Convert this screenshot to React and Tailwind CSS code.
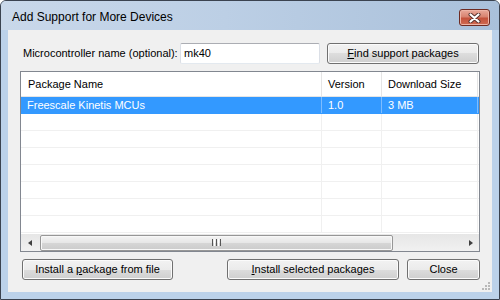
import React from "react";

const btn =
  "h-[21px] rounded-[3px] border border-[#707070] bg-[linear-gradient(#f2f2f2_0%,#ebebeb_50%,#dddddd_50%,#cfcfcf_100%)] shadow-[inset_0_0_0_1px_#fbfbfb] text-[11px] text-black flex items-center justify-center leading-none";

function CloseButton() {
  return (
    <div className="w-[31px] h-[17px] mt-[8px] rounded-[3px] border border-[#6e2b22] bg-[linear-gradient(#e9a99a_0%,#d88370_45%,#c4523c_55%,#cf6b52_100%)] shadow-[inset_0_0_0_1px_#eeb4a6] flex items-center justify-center">
      <svg width="13" height="10" viewBox="0 0 13 10">
        <path d="M2.5 1.5 L10.5 8.5 M10.5 1.5 L2.5 8.5" stroke="#55302c" strokeWidth="4" strokeLinecap="round" />
        <path d="M2.5 1.5 L10.5 8.5 M10.5 1.5 L2.5 8.5" stroke="#ffffff" strokeWidth="2.2" strokeLinecap="round" />
      </svg>
    </div>
  );
}

function Row({ selected, cells }) {
  const line = selected ? "border-[#7dbcff]" : "border-[#f0f0f0]";
  return (
    <div
      className={`flex h-[17px] shrink-0 border-b ${selected ? "bg-[#3399ff] text-white border-[#3399ff]" : "border-[#f0f0f0]"}`}
    >
      <div className={`w-[301px] border-r ${line} pl-[6px] flex items-center`}>{cells[0]}</div>
      <div className={`w-[60px] border-r ${line} pl-[6px] flex items-center`}>{cells[1]}</div>
      <div className={`w-[96px] border-r ${line} pl-[6px] flex items-center`}>{cells[2]}</div>
      <div className="flex-1" />
    </div>
  );
}

function Scrollbar() {
  return (
    <div className="h-[17px] shrink-0 flex items-center bg-[linear-gradient(#e6e6e6,#f1f1f1)]">
      <div className="w-[17px] h-full flex items-center justify-center">
        <div className="w-0 h-0 border-y-[3.5px] border-y-transparent border-r-[4px] border-r-[#404040]" />
      </div>
      <div className="ml-[2px] w-[353px] h-[16px] rounded-[2px] border border-[#979797] bg-[linear-gradient(#f4f4f4_0%,#e6e6e6_50%,#d6d6d6_51%,#cbcbcb_100%)] shadow-[inset_0_0_0_1px_#f8f8f8] flex items-center justify-center gap-[1px]">
        <div className="w-[1px] h-[7px] bg-[#555]" />
        <div className="w-[1px] h-[7px] bg-[#fff]" />
        <div className="w-[1px] h-[7px] bg-[#555]" />
        <div className="w-[1px] h-[7px] bg-[#fff]" />
        <div className="w-[1px] h-[7px] bg-[#555]" />
      </div>
      <div className="flex-1" />
      <div className="w-[17px] h-full flex items-center justify-center">
        <div className="w-0 h-0 border-y-[3.5px] border-y-transparent border-l-[4px] border-l-[#404040]" />
      </div>
    </div>
  );
}

export default function App() {
  const empty = ["", "", ""];
  return (
    <div className="w-[500px] h-[300px] bg-white font-['Liberation_Sans',Arial,sans-serif]">
      <div className="w-[500px] h-[300px] flex flex-col border border-[#3b4350] rounded-t-[6px] overflow-hidden bg-[#bcd2ea]">
        {/* Title bar */}
        <div className="h-[29px] shrink-0 flex justify-between pl-[11px] pr-[9px] bg-[linear-gradient(90deg,#c9d8ea_0%,#bccfe5_45%,#a9c0da_100%)]">
          <span className="text-[12px] text-black pt-[10px] leading-none">Add Support for More Devices</span>
          <CloseButton />
        </div>

        {/* Client area */}
        <div className="relative flex-1 mx-[7px] mb-[7px] bg-[#f0f0f0] flex flex-col px-[12px] pt-[13px] text-[11px] text-black">
          <div className="flex items-center h-[21px]">
            <span className="pl-[3px] w-[160px]">Microcontroller name (optional):</span>
            <div className="w-[140px] h-[21px] rounded-[2px] border border-[#abadb3] border-b-[#e3e9ef] border-x-[#dbdfe6] bg-white flex items-center pl-[3px]">
              mk40
            </div>
            <button className={`${btn} ml-[7px] w-[152px]`}>
              <span>
                <u>F</u>ind support packages
              </span>
            </button>
          </div>

          {/* List view */}
          <div className="mt-[7px] h-[181px] border border-[#828790] bg-white flex flex-col">
            <div className="h-[25px] shrink-0 flex border-b border-[#e5e5e5]">
              <div className="w-[301px] border-r border-[#e5e5e5] pl-[7px] flex items-center">Package Name</div>
              <div className="w-[60px] border-r border-[#e5e5e5] pl-[6px] flex items-center">Version</div>
              <div className="w-[96px] border-r border-[#e5e5e5] pl-[6px] flex items-center">Download Size</div>
              <div className="flex-1" />
            </div>
            <div className="flex-1 flex flex-col overflow-hidden">
              <Row selected cells={["Freescale Kinetis MCUs", "1.0", "3 MB"]} />
              {[0, 1, 2, 3, 4, 5, 6].map((i) => (
                <Row key={i} cells={empty} />
              ))}
            </div>
            <Scrollbar />
          </div>

          {/* Bottom buttons */}
          <div className="mt-[7px] flex">
            <button className={`${btn} ml-[2px] w-[151px]`}>
              <span>
                Install a <u>p</u>ackage from file
              </span>
            </button>
            <div className="ml-auto flex gap-[8px]">
              <button className={`${btn} w-[172px] border-[#3c7fb1] shadow-[inset_0_0_0_1px_#bfe8fb]`}>
                <span>
                  <u>I</u>nstall selected packages
                </span>
              </button>
              <button className={`${btn} w-[73px]`}>Close</button>
            </div>
          </div>

          {/* Resize grip */}
          <div className="absolute right-[2px] bottom-[2px] grid grid-cols-3 gap-[1px]">
            <span className="w-[2px] h-[2px]" />
            <span className="w-[2px] h-[2px]" />
            <span className="w-[2px] h-[2px] bg-[#b8b8b8]" />
            <span className="w-[2px] h-[2px]" />
            <span className="w-[2px] h-[2px] bg-[#b8b8b8]" />
            <span className="w-[2px] h-[2px] bg-[#b8b8b8]" />
            <span className="w-[2px] h-[2px] bg-[#b8b8b8]" />
            <span className="w-[2px] h-[2px] bg-[#b8b8b8]" />
            <span className="w-[2px] h-[2px] bg-[#b8b8b8]" />
          </div>
        </div>
      </div>
    </div>
  );
}
